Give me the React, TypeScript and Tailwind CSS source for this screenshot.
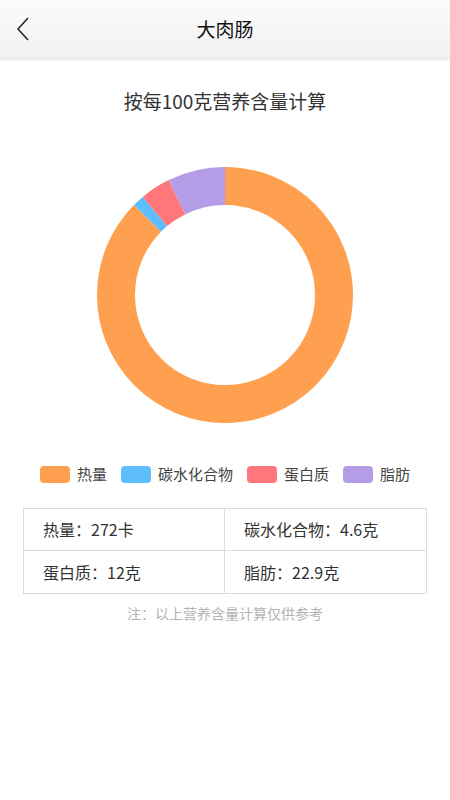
import React from 'react';

const items = [
  { name: '热量', value: 272, unit: '卡', color: '#fea04f' },
  { name: '碳水化合物', value: 4.6, unit: '克', color: '#5ebdfd' },
  { name: '蛋白质', value: 12, unit: '克', color: '#ff767b' },
  { name: '脂肪', value: 22.9, unit: '克', color: '#b49de6' },
];

const Donut: React.FC = () => {
  const total = items.reduce((s, i) => s + i.value, 0);
  const r = 109;
  const c = 2 * Math.PI * r;
  let offset = 0;
  return (
    <svg width="258" height="258" viewBox="0 0 258 258">
      <g transform="rotate(-90 129 129)">
        {items.map((it) => {
          const len = (it.value / total) * c;
          const el = (
            <circle
              key={it.name}
              cx="129"
              cy="129"
              r={r}
              fill="none"
              stroke={it.color}
              strokeWidth="38"
              strokeDasharray={`${len} ${c - len}`}
              strokeDashoffset={-offset}
            />
          );
          offset += len;
          return el;
        })}
      </g>
    </svg>
  );
};

export default function App() {
  return (
    <div className="w-[450px] h-[800px] bg-white text-[#333] font-['Noto_Sans_CJK_SC','Noto_Sans',sans-serif]">
      {/* header */}
      <div className="relative h-[58px] flex items-center justify-center bg-gradient-to-b from-[#fbfbfb] to-[#f1f1f1] shadow-[0_1px_3px_rgba(0,0,0,0.15)]">
        <svg className="absolute left-[14px] top-[14px]" width="20" height="30" viewBox="0 0 20 30">
          <path d="M14 4 L4 15 L14 26" fill="none" stroke="#222" strokeWidth="1.5" />
        </svg>
        <span className="text-[19px] text-[#111]">大肉肠</span>
      </div>

      <div className="pt-[29px] text-center text-[19px] leading-[28px] text-[#333]">按每100克营养含量计算</div>

      <div className="mt-[51px] flex justify-center">
        <Donut />
      </div>

      {/* legend */}
      <div className="mt-[39px] flex justify-center items-center gap-[14px]">
        {items.map((it) => (
          <div key={it.name} className="flex items-center gap-[7px]">
            <span className="w-[30px] h-[17px] rounded-[4px]" style={{ backgroundColor: it.color }} />
            <span className="text-[15px] text-[#444]">{it.name}</span>
          </div>
        ))}
      </div>

      {/* table */}
      <div className="mx-[23px] mt-[22px] grid grid-cols-2 border border-[#dcdcdc]">
        {items.map((it, i) => (
          <div
            key={it.name}
            className={`h-[42px] flex items-center pl-[19px] text-[16px] text-[#333] ${i % 2 === 0 ? 'border-r border-[#dcdcdc]' : ''} ${i < 2 ? 'border-b border-[#dcdcdc]' : ''}`}
          >
            {it.name}：{it.value}{it.unit}
          </div>
        ))}
      </div>

      <div className="mt-[9px] text-center text-[14px] text-[#b3b3b3]">注：以上营养含量计算仅供参考</div>
    </div>
  );
}
